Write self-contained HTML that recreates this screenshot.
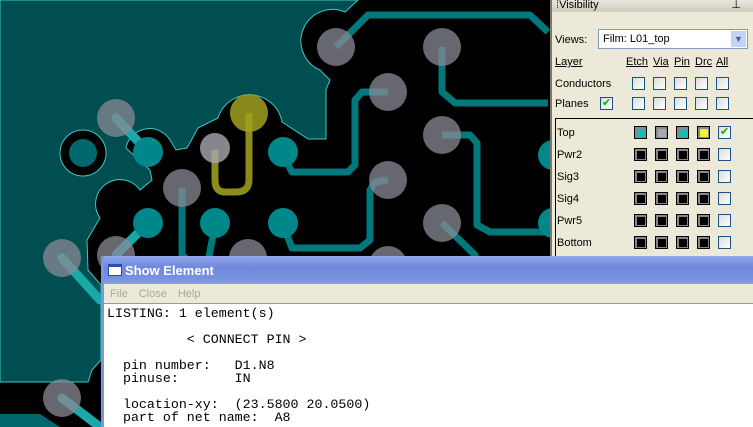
<!DOCTYPE html>
<html><head><style>
*{margin:0;padding:0;box-sizing:border-box}
body{width:753px;height:427px;overflow:hidden;position:relative;background:#000;font-family:"Liberation Sans",sans-serif}
.pcb{position:absolute;left:0;top:0}
.vis{position:absolute;left:550px;top:0;width:203px;height:256px;background:#ece9d8;border-left:2px solid #7a7a6a;font-size:11px;color:#000}
.hdr{height:12px;background:linear-gradient(#e8e6dc,#cfcbbd);font-size:11px;line-height:11px;padding-left:4px;color:#000}
.t{position:absolute;font-size:11px}
.cb{position:absolute;width:13px;height:13px;border:1px solid #1c5180;background:linear-gradient(135deg,#dcdcd6,#fff)}
.bk{position:absolute;width:13px;height:13px;border:1px solid #000;background:#888;}
.bk i{position:absolute;left:2px;top:2px;width:8px;height:8px;background:#000}
.ck::after{content:"✔";position:absolute;left:1px;top:-2px;font-size:11px;color:#21a121}
.win{position:absolute;left:101px;top:256px;width:652px;height:171px;background:#fff;border-left:3px solid #7d95dc}
.title{height:28px;background:linear-gradient(#8fa6ea,#6f88dc 40%,#7891e0 80%,#8aa0e6);color:#fff;font-weight:bold;font-size:13px;line-height:30px;padding-left:21px;position:relative}
.title .ic{position:absolute;left:4px;top:8px;width:14px;height:12px;background:#fff;border:1px solid #2b4bb0;border-top:3px solid #2b4bb0}
.menu{height:20px;background:#ece9d8;font-size:11px;color:#a8a79c;line-height:20px;padding-left:6px;border-bottom:1px solid #9a9a9a}
.menu span{margin-right:11px}
pre{font-family:"Liberation Mono",monospace;font-size:13.3px;line-height:13px;padding:3px 0 0 3px;color:#000}
</style></head><body>
<svg class="pcb" width="553" height="427" viewBox="0 0 553 427">
<rect width="553" height="427" fill="#000"/>
<path d="M0,0 L358,0 L345,12 A27,27 0 0 0 320,70 L330,80 L326,90 L326,139 L308,139 L282,122 A33,33 0 0 0 218,118 L198,128 L187,148 L176,150 L170,140 A24,24 0 0 0 126,148 L150,170 L152,180 L140,190 A24,24 0 0 0 100,218 L87,240 L88,270 L101,285 L101,360 L92,370 L88,382 L0,382 Z" fill="#004e50" stroke="#3cc8c8" stroke-width="1"/>
<path d="M0,414 L40,414 L60,427 L0,427Z" fill="#00686c"/>
<circle cx="83" cy="153" r="23" fill="#000" stroke="#3cc8c8" stroke-width="1"/>
<circle cx="83" cy="153" r="14" fill="#00686c"/>
<g stroke="#00787c" stroke-width="7" fill="none" stroke-linejoin="round">
<path d="M336,47 L368,15 L530,15 L548,32"/>
<path d="M442,47 L442,92 L455,103 L548,103"/>
<path d="M388,92 L362,92 L355,100 L355,165 L348,172 L292,172 L283,155"/>
<path d="M442,135 L470,135 L477,143 L477,225 L490,232 L548,232"/>
<path d="M388,180 L375,182 L370,190 L370,240 L360,248 L292,248 L283,225"/>
<path d="M182,188 L182,255 L190,262 L208,262 L215,225"/>
<path d="M442,223 L475,255 L478,270"/>
</g>
<g stroke="#1aa8aa" stroke-width="9" fill="none" stroke-linecap="round">
<path d="M116,118 L148,152"/><path d="M148,223 L116,255"/>
<path d="M62,258 L100,300"/><path d="M62,398 L100,427"/>
</g>
<g fill="#00878a">
<circle cx="148" cy="152" r="15"/><circle cx="148" cy="223" r="15"/>
<circle cx="215" cy="223" r="15"/><circle cx="283" cy="152" r="15"/>
<circle cx="283" cy="223" r="15"/><circle cx="553" cy="155" r="15"/><circle cx="553" cy="223" r="15"/>
</g>
<path d="M249,113 L249,180 Q249,192 236,192 L225,192 Q215,192 215,180 L215,150" stroke="#8c8c1c" stroke-width="7" fill="none"/>
<circle cx="249" cy="113" r="19" fill="#a0a020" opacity=".85"/>
<g fill="#8a8a96" opacity=".75">
<circle cx="336" cy="47" r="19"/><circle cx="442" cy="47" r="19"/><circle cx="388" cy="92" r="19"/>
<circle cx="442" cy="135" r="19"/><circle cx="116" cy="118" r="19"/><circle cx="182" cy="188" r="19"/>
<circle cx="388" cy="180" r="19"/><circle cx="442" cy="223" r="19"/><circle cx="248" cy="258" r="19"/>
<circle cx="116" cy="255" r="19"/><circle cx="62" cy="258" r="19"/><circle cx="388" cy="265" r="19"/>
<circle cx="62" cy="398" r="19"/>
</g>
<circle cx="215" cy="148" r="15" fill="#a8a8b0" opacity=".8"/>
</svg>

<div class="vis">
<div class="hdr"><span style="color:#335">⁞</span>Visibility<span style="position:absolute;right:12px;top:0">⊥</span></div>
<div class="t" style="left:3px;top:34px">Views:</div>
<div style="position:absolute;left:46px;top:29px;width:150px;height:20px;background:#fff;border:1px solid #7f9db9;font-size:11px;line-height:18px;padding-left:4px">Film: L01_top<span style="position:absolute;right:1px;top:1px;width:15px;height:16px;background:#c1d3fb;color:#4d6185;font-size:9px;text-align:center;line-height:16px">▼</span></div>
<div class="t" style="left:3px;top:56px;text-decoration:underline">Layer</div>
<div class="t" style="left:74px;top:56px;text-decoration:underline">Etch</div>
<div class="t" style="left:101px;top:56px;text-decoration:underline">Via</div>
<div class="t" style="left:122px;top:56px;text-decoration:underline">Pin</div>
<div class="t" style="left:143px;top:56px;text-decoration:underline">Drc</div>
<div class="t" style="left:164px;top:56px;text-decoration:underline">All</div>
<div class="t" style="left:3px;top:78px">Conductors</div>
<div class="t" style="left:3px;top:98px">Planes</div>
<div class="cb ck" style="left:48px;top:97px"></div>
<div class="cb" style="left:80px;top:77px"></div><div class="cb" style="left:101px;top:77px"></div><div class="cb" style="left:122px;top:77px"></div><div class="cb" style="left:143px;top:77px"></div><div class="cb" style="left:164px;top:77px"></div>
<div class="cb" style="left:80px;top:97px"></div><div class="cb" style="left:101px;top:97px"></div><div class="cb" style="left:122px;top:97px"></div><div class="cb" style="left:143px;top:97px"></div><div class="cb" style="left:164px;top:97px"></div>
<div style="position:absolute;left:3px;top:118px;width:200px;height:140px;border-left:1px solid #000;border-top:1px solid #000"></div>
<div class="t" style="left:5px;top:127px">Top</div>
<div class="t" style="left:5px;top:149px">Pwr2</div>
<div class="t" style="left:5px;top:171px">Sig3</div>
<div class="t" style="left:5px;top:193px">Sig4</div>
<div class="t" style="left:5px;top:215px">Pwr5</div>
<div class="t" style="left:5px;top:237px">Bottom</div>
<div class="bk" style="left:82px;top:126px"><i style="background:#1cb8b8"></i></div>
<div class="bk" style="left:103px;top:126px"><i style="background:#a8a8b0"></i></div>
<div class="bk" style="left:124px;top:126px"><i style="background:#1cb8b8"></i></div>
<div class="bk" style="left:145px;top:126px"><i style="background:#f0f040"></i></div>
<div class="cb ck" style="left:166px;top:126px"></div>
<div class="bk" style="left:82px;top:148px"><i></i></div><div class="bk" style="left:103px;top:148px"><i></i></div><div class="bk" style="left:124px;top:148px"><i></i></div><div class="bk" style="left:145px;top:148px"><i></i></div><div class="cb" style="left:166px;top:148px"></div>
<div class="bk" style="left:82px;top:170px"><i></i></div><div class="bk" style="left:103px;top:170px"><i></i></div><div class="bk" style="left:124px;top:170px"><i></i></div><div class="bk" style="left:145px;top:170px"><i></i></div><div class="cb" style="left:166px;top:170px"></div>
<div class="bk" style="left:82px;top:192px"><i></i></div><div class="bk" style="left:103px;top:192px"><i></i></div><div class="bk" style="left:124px;top:192px"><i></i></div><div class="bk" style="left:145px;top:192px"><i></i></div><div class="cb" style="left:166px;top:192px"></div>
<div class="bk" style="left:82px;top:214px"><i></i></div><div class="bk" style="left:103px;top:214px"><i></i></div><div class="bk" style="left:124px;top:214px"><i></i></div><div class="bk" style="left:145px;top:214px"><i></i></div><div class="cb" style="left:166px;top:214px"></div>
<div class="bk" style="left:82px;top:236px"><i></i></div><div class="bk" style="left:103px;top:236px"><i></i></div><div class="bk" style="left:124px;top:236px"><i></i></div><div class="bk" style="left:145px;top:236px"><i></i></div><div class="cb" style="left:166px;top:236px"></div>
</div>

<div class="win">
<div class="title"><span class="ic"></span>Show Element</div>
<div class="menu"><span>File</span><span>Close</span><span>Help</span></div>
<pre>LISTING: 1 element(s)

          &lt; CONNECT PIN &gt;

  pin number:   D1.N8
  pinuse:       IN

  location-xy:  (23.5800 20.0500)
  part of net name:  A8</pre>
</div>
</body></html>
